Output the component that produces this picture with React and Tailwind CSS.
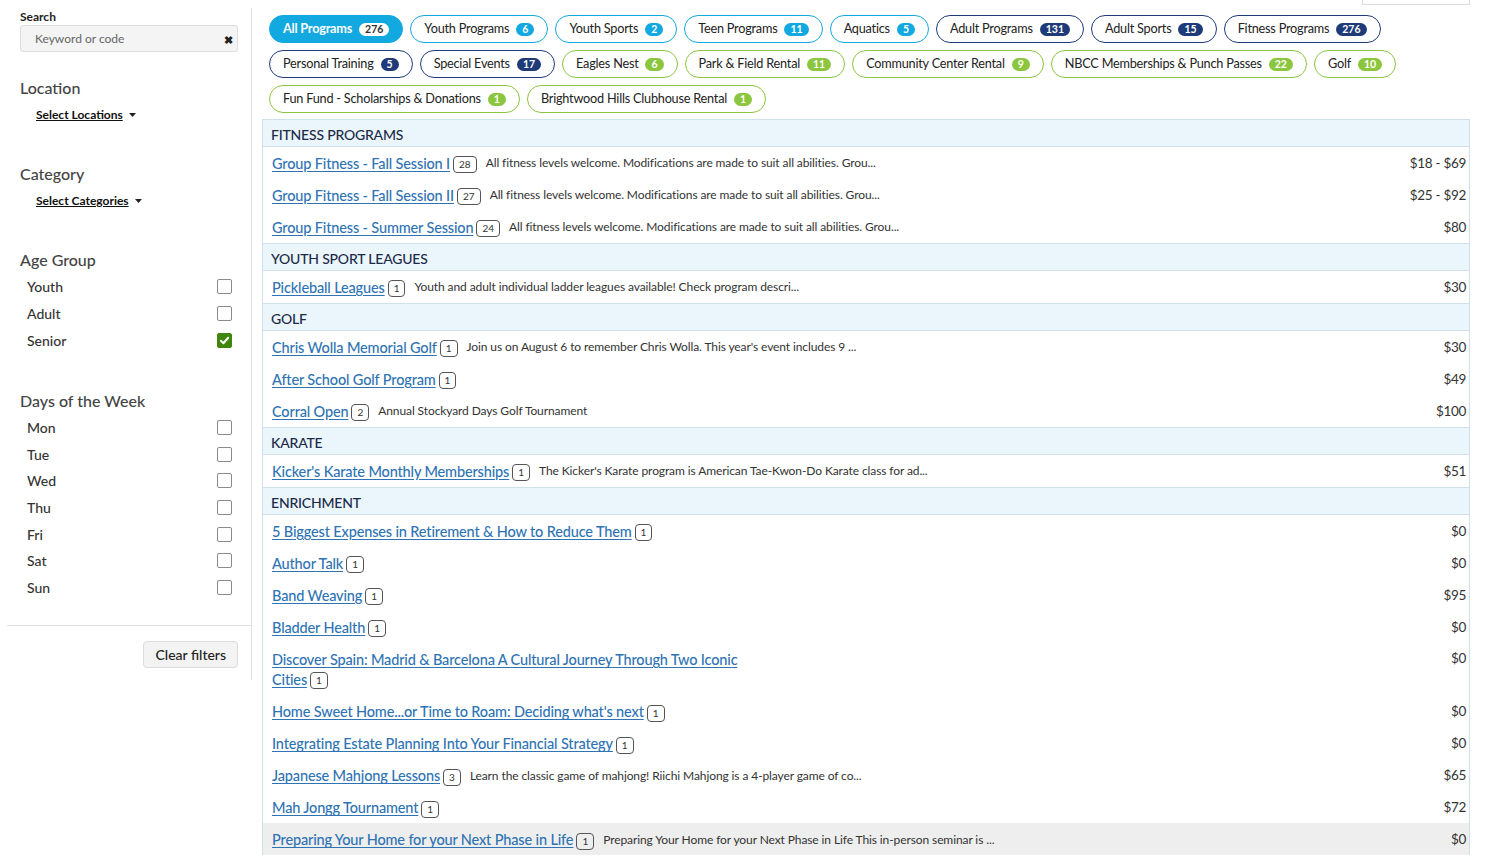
import React from "react";

const pills = [
  [
    ["All Programs", "276", "active"],
    ["Youth Programs", "6", "sky"],
    ["Youth Sports", "2", "sky"],
    ["Teen Programs", "11", "sky"],
    ["Aquatics", "5", "sky"],
    ["Adult Programs", "131", "navy"],
    ["Adult Sports", "15", "navy"],
    ["Fitness Programs", "276", "navy"],
  ],
  [
    ["Personal Training", "5", "navy"],
    ["Special Events", "17", "navy"],
    ["Eagles Nest", "6", "green"],
    ["Park & Field Rental", "11", "green"],
    ["Community Center Rental", "9", "green"],
    ["NBCC Memberships & Punch Passes", "22", "green"],
    ["Golf", "10", "green"],
  ],
  [
    ["Fun Fund - Scholarships & Donations", "1", "green"],
    ["Brightwood Hills Clubhouse Rental", "1", "green"],
  ],
];

const pillCls = {
  active: "bg-[#12a8e0] border-[#12a8e0] text-white font-bold",
  sky: "bg-white border-[#12a8e0] text-[#222]",
  navy: "bg-white border-[#1e3a78] text-[#222]",
  green: "bg-white border-[#8cc63f] text-[#222]",
};
const badgeCls = {
  active: "bg-white text-[#333]",
  sky: "bg-[#12a8e0] text-white",
  navy: "bg-[#1e3a78] text-white",
  green: "bg-[#8cc63f] text-white",
};

const fit = "All fitness levels welcome. Modifications are made to suit all abilities. Grou...";

const sections = [
  {
    title: "FITNESS PROGRAMS",
    rows: [
      ["Group Fitness - Fall Session I", "28", fit, "$18 - $69"],
      ["Group Fitness - Fall Session II", "27", fit, "$25 - $92"],
      ["Group Fitness - Summer Session", "24", fit, "$80"],
    ],
  },
  {
    title: "YOUTH SPORT LEAGUES",
    rows: [
      ["Pickleball Leagues", "1", "Youth and adult individual ladder leagues available! Check program descri...", "$30"],
    ],
  },
  {
    title: "GOLF",
    rows: [
      ["Chris Wolla Memorial Golf", "1", "Join us on August 6 to remember Chris Wolla. This year's event includes 9 ...", "$30"],
      ["After School Golf Program", "1", "", "$49"],
      ["Corral Open", "2", "Annual Stockyard Days Golf Tournament", "$100"],
    ],
  },
  {
    title: "KARATE",
    rows: [
      ["Kicker's Karate Monthly Memberships", "1", "The Kicker's Karate program is American Tae-Kwon-Do Karate class for ad...", "$51"],
    ],
  },
  {
    title: "ENRICHMENT",
    rows: [
      ["5 Biggest Expenses in Retirement & How to Reduce Them", "1", "", "$0"],
      ["Author Talk", "1", "", "$0"],
      ["Band Weaving", "1", "", "$95"],
      ["Bladder Health", "1", "", "$0"],
      ["Discover Spain: Madrid & Barcelona A Cultural Journey Through Two Iconic Cities", "1", "", "$0"],
      ["Home Sweet Home...or Time to Roam: Deciding what's next", "1", "", "$0"],
      ["Integrating Estate Planning Into Your Financial Strategy", "1", "", "$0"],
      ["Japanese Mahjong Lessons", "3", "Learn the classic game of mahjong! Riichi Mahjong is a 4-player game of co...", "$65"],
      ["Mah Jongg Tournament", "1", "", "$72"],
      ["Preparing Your Home for your Next Phase in Life", "1", "Preparing Your Home for your Next Phase in Life This in-person seminar is ...", "$0", true],
    ],
  },
];

function Checkbox({ checked }) {
  if (checked) {
    return (
      <span className="w-[15px] h-[15px] rounded-[2px] bg-[#3f860c] border border-[#3f860c] flex items-center justify-center">
        <svg width="11" height="11" viewBox="0 0 12 12">
          <path d="M2 6.3 L4.8 9 L10 3" fill="none" stroke="white" strokeWidth="2.2" strokeLinecap="round" strokeLinejoin="round" />
        </svg>
      </span>
    );
  }
  return <span className="w-[15px] h-[15px] rounded-[2px] bg-white border border-[#8a8a8a]" />;
}

function CheckRow({ label, checked, h }) {
  return (
    <div className={`flex items-center justify-between pl-[7px] pr-[6px] ${h}`}>
      <span className="text-[14px] text-[#333] font-medium">{label}</span>
      <Checkbox checked={checked} />
    </div>
  );
}

function Caret() {
  return (
    <svg width="7" height="4" viewBox="0 0 7 4" className="ml-[6px] inline-block">
      <path d="M0 0 L7 0 L3.5 4 Z" fill="#222" />
    </svg>
  );
}

export default function App() {
  return (
    <div className="flex bg-white min-h-[857px]" style={{ fontFamily: "Lato, 'Open Sans', sans-serif" }}>
      <aside className="w-[252px] shrink-0 self-start mt-[8px] border-r border-[#e3e3e3] pl-[7px] pb-[12px]">
        <div className="pl-[13px] pr-[13px] pt-[1px]">
          <div className="text-[12px] leading-[16px] font-bold text-[#222]">Search</div>
          <div className="h-[27px] bg-[#f4f4f4] border border-[#dedede] rounded-[3px] flex items-center justify-between pl-[14px] pr-[4px]">
            <span className="text-[12px] text-[#666]">Keyword or code</span>
            <span className="text-[11px] font-bold text-[#222] mt-[3px]">✖</span>
          </div>

          <div className="mt-[26px] text-[16px] leading-[20px] text-[#444] font-medium">Location</div>
          <div className="mt-[9px] pl-[16px] text-[12px] leading-[16px] font-bold text-[#111] flex items-center">
            <span className="underline">Select Locations</span>
            <Caret />
          </div>

          <div className="mt-[41px] text-[16px] leading-[20px] text-[#444] font-medium">Category</div>
          <div className="mt-[9px] pl-[16px] text-[12px] leading-[16px] font-bold text-[#111] flex items-center">
            <span className="underline">Select Categories</span>
            <Caret />
          </div>

          <div className="mt-[41px] text-[16px] leading-[20px] text-[#444] font-medium">Age Group</div>
          <div className="mt-[3px]">
            <CheckRow label="Youth" h="h-[27px]" />
            <CheckRow label="Adult" h="h-[27px]" />
            <CheckRow label="Senior" h="h-[27px]" checked />
          </div>

          <div className="mt-[37px] text-[16px] leading-[20px] text-[#444] font-medium">Days of the Week</div>
          <div className="mt-[3px]">
            {["Mon", "Tue", "Wed", "Thu", "Fri", "Sat", "Sun"].map((d) => (
              <CheckRow key={d} label={d} h="h-[26.7px]" />
            ))}
          </div>
        </div>
        <div className="mt-[24px] border-t border-[#e0e0e0]" />
        <div className="flex justify-end pr-[13px] mt-[15px]">
          <button className="h-[27px] px-[11px] bg-[#f3f3f3] border border-[#dcdcdc] rounded-[4px] text-[14px] text-[#222] font-medium">
            Clear filters
          </button>
        </div>
      </aside>

      <main className="flex-1 pl-[10px] pr-[16px]">
        <div className="flex justify-end">
          <div className="w-[108px] h-[5px] border border-t-0 border-[#dddddd]" />
        </div>

        <div className="mt-[10px] pl-[7px] flex flex-col gap-y-[7px]">
          {pills.map((row, i) => (
            <div key={i} className="flex gap-x-[7px]">
              {row.map(([label, n, kind]) => (
                <div
                  key={label}
                  className={`h-[28px] rounded-full border-[1.5px] flex items-center pl-[13px] pr-[13px] text-[12.7px] whitespace-nowrap ${pillCls[kind]}`}
                >
                  <span className="tracking-[-0.22px]">{label}</span>
                  <span className={`ml-[7px] h-[13px] px-[6px] rounded-full text-[10.5px] font-bold leading-[13px] flex items-center ${badgeCls[kind]}`}>
                    {n}
                  </span>
                </div>
              ))}
            </div>
          ))}
        </div>

        <div className="mt-[6px] border-x border-[#cfe2eb]">
          {sections.map((s) => (
            <div key={s.title}>
              <div className="h-[28px] bg-[#ebf6fc] border-y border-[#cfe2eb] pl-[8px] pt-[2px] flex items-center text-[14px] text-[#1b2a48] tracking-[-0.2px] font-medium">
                {s.title}
              </div>
              {s.rows.map(([name, n, desc, price, hl]) => {
                const multi = name.length > 60;
                return (
                  <div
                    key={name}
                    className={`flex justify-between pl-[9px] pr-[3px] min-h-[32px] leading-[19px] ${multi ? "items-start py-[6px]" : "items-center"} ${hl ? "bg-[#eeeeee]" : ""}`}
                  >
                    <div className="flex items-center">
                      <span className="max-w-[490px] leading-[19px]">
                        <a className="text-[14.5px] text-[#2e73b4] underline underline-offset-[2px] tracking-[-0.15px] font-medium">{name}</a>
                        <span className="inline-block align-middle ml-[3px] h-[17px] border border-[#555] rounded-[4px] text-[10px] leading-[15px] px-[5px] text-[#333]">
                          {n}
                        </span>
                      </span>
                      {desc && (
                        <span className="ml-[9px] text-[12px] leading-[19px] text-[#333] tracking-[-0.1px] whitespace-nowrap">{desc}</span>
                      )}
                    </div>
                    <span className="text-[13.5px] leading-[19px] text-[#333] tracking-[-0.3px] whitespace-nowrap">{price}</span>
                  </div>
                );
              })}
            </div>
          ))}
        </div>
      </main>
    </div>
  );
}
